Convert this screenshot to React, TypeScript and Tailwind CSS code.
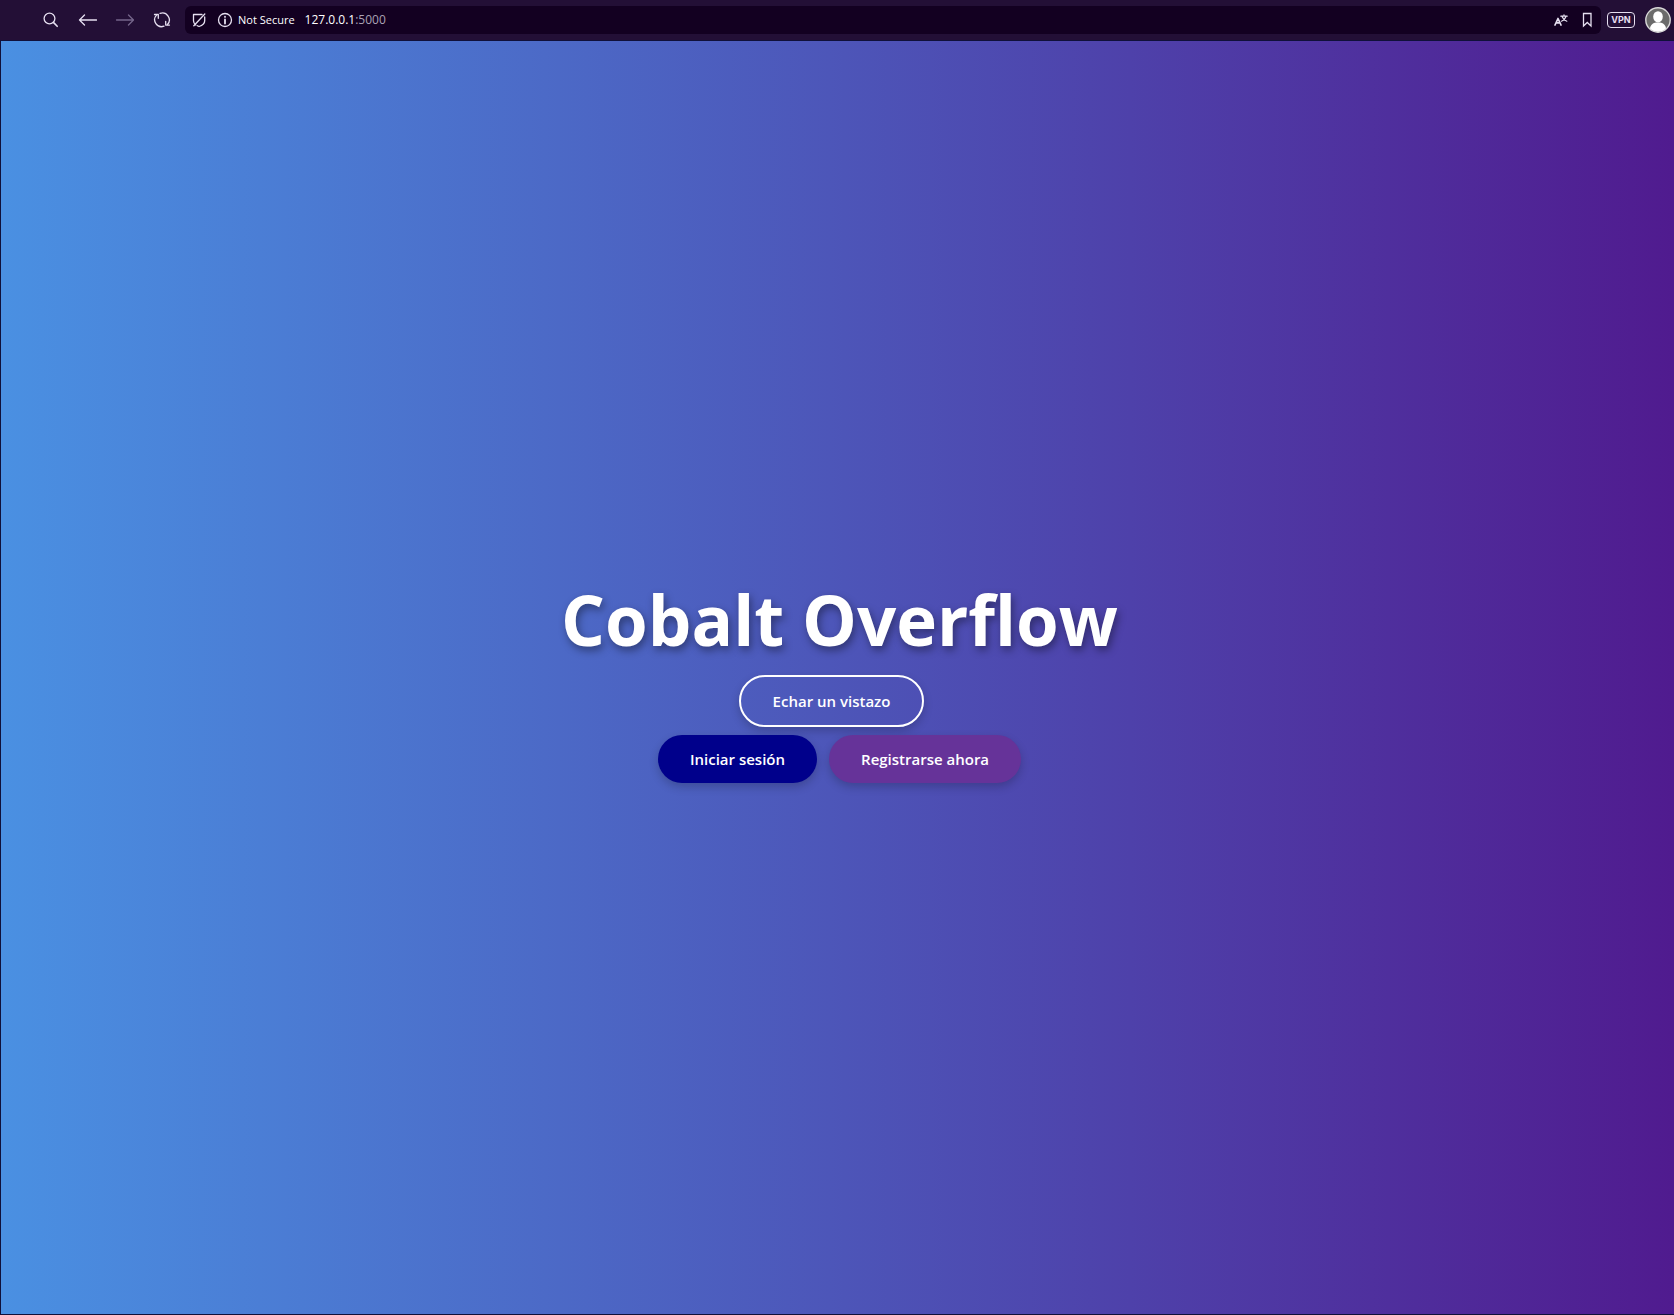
import type { ReactNode } from "react";

function BarButton({ label, children }: { label: string; children: ReactNode }) {
  return (
    <button type="button" aria-label={label} className="flex size-5 shrink-0 items-center justify-center">
      {children}
    </button>
  );
}

const stroke = {
  fill: "none",
  stroke: "currentColor",
  strokeWidth: 1.3,
  strokeLinecap: "round" as const,
  strokeLinejoin: "round" as const,
};

function BrowserBar() {
  return (
    <header className="flex h-10 shrink-0 items-center bg-[#230f36] pr-[3px] pl-10 text-[#e6dff0]">
      <nav aria-label="Browser" className="flex items-center gap-[17px]">
        <BarButton label="Search">
          <svg width="20" height="20" viewBox="0 0 20 20" {...stroke}>
            <circle cx="9.5" cy="8.5" r="5.4" />
            <path d="M13.4 12.4l3.8 3.9" strokeWidth="1.6" />
          </svg>
        </BarButton>
        <BarButton label="Back">
          <svg width="20" height="20" viewBox="0 0 20 20" {...stroke}>
            <path d="M2.500 10h17M7.500 5L2.500 10l5 5" />
          </svg>
        </BarButton>
        <BarButton label="Forward">
          <svg width="20" height="20" viewBox="0 0 20 20" {...stroke} className="text-[#75658a]">
            <path d="M2.500 10h17M14.500 5l5 5-5 5" />
          </svg>
        </BarButton>
        <BarButton label="Reload">
          <svg width="20" height="20" viewBox="0 0 20 20" {...stroke}>
            <path d="M9 3.400A6.900 6.900 0 0 1 16.500 14.500M13 16.200A6.900 6.900 0 0 1 5.500 5.100" />
            <path d="M3.500 4.500h3.800v3.800M18.500 15.100h-3.800v-3.800" />
          </svg>
        </BarButton>
      </nav>
      <div className="ml-[14px] flex h-7 flex-1 items-center rounded-md bg-[#130021] pr-1 pl-1">
        <BarButton label="Tracker blocking">
          <svg width="20" height="20" viewBox="0 0 20 20" {...stroke}>
            <path d="M13 4.500H4.500v6.200c0 1.900.9 3.300 2.300 4.400M15.700 7v3.700c0 3-2.400 4.700-5.700 5.800-.6-.2-1.200-.4-1.700-.7" />
            <path d="M15.800 4L4.800 15.800" />
          </svg>
        </BarButton>
        <button type="button" className="ml-1 flex items-center gap-1 text-[11px]">
          <svg width="20" height="20" viewBox="0 0 20 20" {...stroke}>
            <circle cx="12" cy="10" r="6.500" />
            <path d="M12 9.500v4M12 6.700v.2" strokeWidth="1.800" />
          </svg>
          <span className="ml-px text-white">Not Secure</span>
        </button>
        <p className="ml-[10px] flex-1 text-xs text-white">
          127.0.0.1<span className="text-[#aaa2b4]">:5000</span>
        </p>
        <div className="flex items-center gap-[6px]">
          <BarButton label="Translate">
            <svg width="20" height="20" viewBox="0 0 20 20" {...stroke}>
              <path d="M4 15l3-6.500L10 15M5 12.800h4" strokeWidth="1.700" />
              <path d="M9.800 6.200h6.400M13 4.800v1.400M11 6.500c.8 2.200 2.500 3.800 4.800 4.700M15 6.500c-.7 2.200-2.300 3.900-4.500 4.700" strokeWidth="1.200" />
            </svg>
          </BarButton>
          <BarButton label="Bookmark">
            <svg width="20" height="20" viewBox="0 0 20 20" {...stroke}>
              <path d="M6.500 3.500h7.500v12.500L10.250 12.500 6.500 16z" strokeLinejoin="miter" />
            </svg>
          </BarButton>
        </div>
      </div>
      <button
        type="button"
        className="ml-[6px] flex h-4 w-7 items-center justify-center rounded-sm border border-[#e6dff0] font-['Inter',sans-serif] text-[9px] font-bold"
      >
        VPN
      </button>
      <button type="button" aria-label="Profile" className="ml-[10px] size-[26px] rounded-full">
        <svg width="26" height="26" viewBox="0 0 26 26">
          <circle cx="13" cy="13" r="12.200" fill="#6b6b6b" stroke="#d8d8d8" strokeWidth="1.400" />
          <ellipse cx="13" cy="9.800" rx="4.800" ry="5.600" fill="#fff" />
          <path d="M5 21.500c.4-4 3.300-5.500 6-6h4c2.700.5 5.600 2 6 6a11.600 11.600 0 0 1-16 0z" fill="#fff" />
        </svg>
      </button>
    </header>
  );
}

const pill =
  "rounded-full px-8 py-3 text-[15px] leading-6 font-semibold text-white shadow-[0_4px_10px_rgba(0,0,0,0.2)]";

export default function App() {
  return (
    <div className="flex min-h-screen flex-col bg-[#10103a] font-['Open_Sans','Noto_Sans',sans-serif]">
      <BrowserBar />
      <main className="mt-px mb-px ml-px flex flex-1 flex-col items-center justify-center bg-linear-to-r/srgb from-[#4a90e2] to-[#501b8f] pb-[2px] pl-1">
        <h1 className="text-[69px] leading-[96px] font-bold text-white [text-shadow:2px_4px_8px_rgba(0,0,0,0.4)]">
          Cobalt Overflow
        </h1>
        <a href="#vistazo" className={`mt-2 mr-4 border-2 border-white ${pill}`}>
          Echar un vistazo
        </a>
        <div className="mt-2 flex gap-3">
          <a href="#iniciar" className={`bg-[#00008b] ${pill}`}>
            Iniciar sesión
          </a>
          <a href="#registro" className={`bg-[#663399] ${pill}`}>
            Registrarse ahora
          </a>
        </div>
      </main>
    </div>
  );
}
